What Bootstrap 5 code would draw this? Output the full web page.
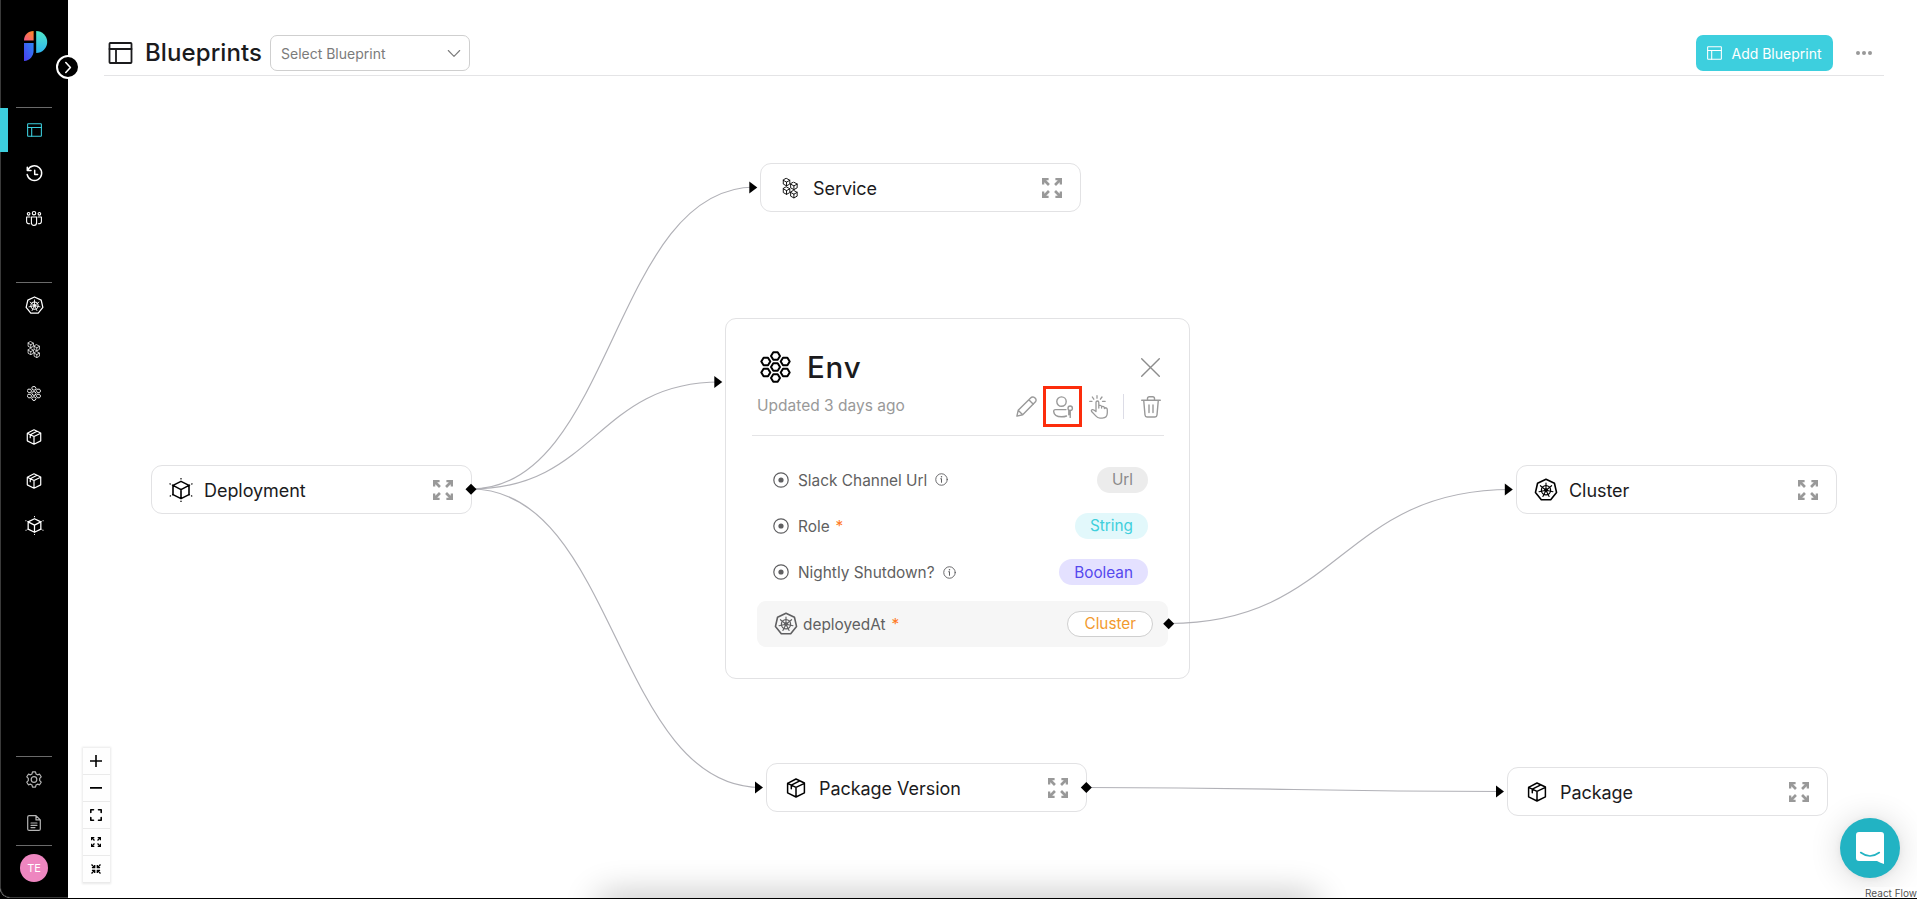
<!DOCTYPE html>
<html lang="en">
<head>
<meta charset="utf-8">
<meta name="viewport" content="width=device-width, initial-scale=1">
<title>Blueprints</title>
<link href="https://cdn.jsdelivr.net/npm/bootstrap@5.3.0/dist/css/bootstrap.min.css" rel="stylesheet">
<style>
  body { font-family: Inter, "Liberation Sans", sans-serif; color: #1b1b1d; background: #000; height: 100vh; overflow: hidden; }
  svg { display: block; overflow: visible; flex: none; }
  .ico { fill: none; stroke: currentColor; stroke-linecap: round; stroke-linejoin: round; }
  .app { height: 898px; background: #fff; border-bottom-left-radius: 10px; overflow: hidden; }

  .side { width: 68px; background: #000; color: #fff; border-left: 1px solid #3a3a3a; border-bottom: 1px solid #3a3a3a; border-bottom-left-radius: 10px; position: relative; z-index: 3; }
  .side-logo { height: 107px; padding: 31px 0 0 23px; }
  .side-rule { width: 36px; height: 1px; margin-left: 15px; background: #6a6a6a; flex: none; }
  .side-item { height: 44px; width: 67px; padding-right: 1px; color: #fff; }
  .side-item.current { color: #3dcfde; box-shadow: inset 7px 0 #3dcfde, -1px 0 #3dcfde; }
  .side-item.dim { color: #b5b5b5; }
  .side-gap { height: 42px; }
  .side-toggle { position: absolute; left: 55px; top: 55px; width: 24px; height: 24px; border: 2px solid #fff; background: #000; color: #fff; }
  .avatar { width: 28px; height: 28px; margin: 8px 0 15px 19px; background: #ee86c0; font-size: 11px; }

  .topbar { height: 76px; margin-left: 36px; margin-right: 33px; padding-top: 31px; border-bottom: 1px solid #e4e4e6; }
  .topbar h1 { font-size: 24px; font-weight: 500; width: 121px; white-space: nowrap; letter-spacing: .1px; padding-top: 1px; }
  .picker { width: 200px; height: 36px; border: 1px solid #cfcfcf; border-radius: 7px; color: #7b7b7b; font-size: 14px; padding: 0 9px 0 10px; }
  .btn-add { width: 137px; height: 36px; background: #3dcfde; color: #fff; border-radius: 7px; font-size: 14px; padding: 0; }
  .btn-add:hover { background: #33bfce; color: #fff; }
  .btn-add svg { margin-right: 9px; }
  .more { color: #999; margin-left: 23px; margin-right: 12px; }

  /* canvas nodes */
  .canvas { position: relative; overflow: hidden; }
  .edges { position: absolute; left: 0; top: 0; pointer-events: none; }
  .node { position: absolute; background: #fff; border: 1px solid #e2e2e4; border-radius: 11px; }
  .node-sm { width: 321px; height: 49px; padding: 0 18px 0 17px; font-size: 18px; }
  .node-sm .slot { width: 24px; margin-right: 11px; color: #000; }
  .node-sm .name { padding-top: 2px; letter-spacing: -.05px; }
  .node-sm .grow-ico { color: #999; }
  #n-service { left: 692px; top: 87px; }
  #n-deployment { left: 83px; top: 389px; }
  #n-version { left: 698px; top: 687px; }
  #n-cluster { left: 1448px; top: 389px; }
  #n-package { left: 1439px; top: 691px; }
  #n-env { left: 657px; top: 242px; width: 465px; height: 361px; padding: 30px 20px 0 26px; }
  .env-head { height: 36px; padding: 0 9px 0 7px; }
  .env-head h2 { font-size: 29.5px; font-weight: 500; margin-left: 15px; letter-spacing: .8px; padding-top: 1px; }
  .env-tools { height: 50px; padding: 0 8px 7px 5px; color: #999; }
  .env-tools small { font-size: 15.5px; padding-bottom: 2px; }
  .env-rule { height: 1px; width: 412px; background: #e4e4e6; }
  .hot { width: 39px; height: 41px; border: 3px solid #fc2d0c; margin: 0 7px 0 6px; }
  .tool-sep { width: 1px; height: 25px; background: #dcdce6; margin: 0 17px 0 15px; }
  .env-props { padding-top: 20.5px; }
  .prop { height: 46.4px; padding-left: 21px; padding-right: 21px; color: #5f5f61; font-size: 15.4px; }
  .prop .lead-ico { margin-right: 9px; }
  .prop span, .relation span { padding-top: 1px; }
  .star { color: #ff7a1f; margin-left: 6px; }
  .prop .pill, .relation .pill { height: 26px; border-radius: 13px; font-size: 15.3px; padding: 1px 15px 0; }
  .pill-url { background: #ececec; color: #8a8a8a; }
  .pill-string { background: #e2f8fb; color: #40cfdc; }
  .pill-bool { background: #e4e1ff; color: #5548ee; }
  .pill-rel { background: #fff; color: #f29a2e; border: 1px solid #cfcfcf; }
  .relation .pill-rel { padding: 1px 16px 0; }
  .relation { width: 411px; height: 46px; margin-left: 5px; margin-top: 5px; background: #f6f6f6; border-radius: 9px; padding: 0 15px 0 17px; color: #5f5f61; font-size: 15.4px; }
  .relation > svg { margin-right: 5px; }

  .zoomer { position: absolute; left: 14.5px; top: 672px; width: 27px; background: #fefefe; box-shadow: 0 0 2px 1px rgba(0,0,0,.09); }
  .zoomer button { height: 27px; width: 27px; border: 0; border-bottom: 1px solid #eaeaea; background: none; padding: 0; color: #000; }
  .chat { position: absolute; left: 1772px; top: 742px; width: 60px; height: 60px; background: #22b3c3; box-shadow: 0 1px 6px rgba(0,0,0,.06), 0 2px 32px rgba(0,0,0,.16); }
  .credit { position: absolute; right: 0; bottom: -1px; font-size: 10px; line-height: 12px; color: #555; background: rgba(255,255,255,.5); white-space: nowrap; }
  .dock-shade { position: absolute; left: 536px; right: 606px; bottom: -18px; height: 14px; border-radius: 10px; box-shadow: 0 0 34px 8px rgba(0,0,0,.24); }
</style>
</head>
<body>
<svg width="0" height="0" class="position-absolute">
  <symbol id="i-layout" viewBox="0 0 24 22"><g class="ico"><rect x="1" y="1" width="22" height="20" rx=".8"/><path d="M1 7h22M7.5 7v14"/></g></symbol>
  <symbol id="i-k8s" viewBox="0 0 24 24"><g class="ico"><path stroke-width="1.6" d="M12 1.2 20.44 5.27 22.53 14.4 16.69 21.73H7.31L1.47 14.4 3.56 5.27z"/><circle cx="12" cy="12.2" r="4.6" stroke-width="1.3"/><path stroke-width="1.1" d="M12 12.2V5M12 12.2l5.6-4.5M12 12.2l7 1.5M12 12.2l3.1 6.3M12 12.2l-3.1 6.3M12 12.2l-7 1.5M12 12.2 6.4 7.7"/><circle cx="12" cy="12.2" r="1.6"/></g></symbol>
  <symbol id="i-mini" viewBox="0 0 10 10"><path class="ico" d="M5 .9 8.6 2.9V7.1L5 9.1 1.4 7.1V2.9zM1.4 2.9 5 5l3.6-2.1M5 5v4"/></symbol>
  <symbol id="i-service" viewBox="0 0 18 22"><use href="#i-mini" x="0" y="0" width="9.6" height="9.6"/><use href="#i-mini" x="7.8" y="4" width="9.6" height="9.6"/><use href="#i-mini" x="0" y="9" width="9.6" height="9.6"/><use href="#i-mini" x="7.8" y="12.8" width="9.6" height="9.6"/></symbol>
  <symbol id="i-hexes" viewBox="0 0 30 32"><g class="ico" stroke-width="2"><path id="hx" d="M12.8 1.3h4.4L19.5 5 17.2 8.7h-4.4L10.5 5z"/><use href="#hx" y="11"/><use href="#hx" y="22"/><use href="#hx" x="-9.7" y="5.5"/><use href="#hx" x="9.7" y="5.5"/><use href="#hx" x="-9.7" y="16.5"/><use href="#hx" x="9.7" y="16.5"/></g></symbol>
  <symbol id="i-box" viewBox="0 0 20 20"><path class="ico" stroke-width="1.5" d="M10 1 18.4 5V14.8L10 19 1.6 14.8V5.4zM1.6 5.4 10 9.4l8.400-4M10 9.400v9.600M5.300 7.200 13.800 2.900M5.300 7.200v3.600"/></symbol>
  <symbol id="i-cube" viewBox="0 0 24 24"><g class="ico"><path stroke-width="1.6" d="M12 3.4 20 7.4V16.6L12 20.6 4 16.6V7.4zM4 7.4 12 11.6l8-4.2M12 11.6v9"/><path stroke-width="1.3" stroke-dasharray=".3 2.4" d="M12 .6V3M12 23.4V21M1 5.9 4 7.4M23 5.9 20 7.4M1.2 18 4 16.6M22.8 18 20 16.6"/></g></symbol>
  <symbol id="i-expand" viewBox="0 0 20 20"><g id="ar"><path d="M0 0h6.6v2.3H4.2L7.9 6 6 7.9 2.3 4.2v2.4H0z" fill="currentColor"/></g><use href="#ar" transform="matrix(-1 0 0 1 20 0)"/><use href="#ar" transform="matrix(1 0 0 -1 0 20)"/><use href="#ar" transform="matrix(-1 0 0 -1 20 20)"/></symbol>
  <symbol id="i-shrink" viewBox="0 0 20 20"><g id="as"><path d="M8.7 8.7H1.8V6.1H4.3L0 2 2 0l4.1 4.3V1.8h2.6z" fill="currentColor"/></g><use href="#as" transform="matrix(-1 0 0 1 20 0)"/><use href="#as" transform="matrix(1 0 0 -1 0 20)"/><use href="#as" transform="matrix(-1 0 0 -1 20 20)"/></symbol>
  <symbol id="i-radio" viewBox="0 0 16 16"><circle class="ico" cx="8" cy="8" r="7.2" stroke-width="1.2"/><circle cx="8" cy="8" r="2.6" fill="currentColor"/></symbol>
  <symbol id="i-info" viewBox="0 0 14 14"><circle class="ico" cx="7" cy="7" r="6.2"/><path class="ico" stroke-width="1.1" d="M7 6.3V10M6.1 6.3H7"/><circle cx="7" cy="4" r=".8" fill="currentColor"/></symbol>
</svg>

<div class="app d-flex">
  <nav class="side d-flex flex-column flex-shrink-0">
    <div class="side-logo">
      <svg width="23" height="30" viewBox="0 0 23 30">
        <defs>
          <linearGradient id="g1" x1="0" y1="1" x2="1" y2="0"><stop offset="0" stop-color="#f5588a"/><stop offset="1" stop-color="#ff8a1f"/></linearGradient>
          <linearGradient id="g2" x1="0" y1="0" x2="0" y2="1"><stop offset="0" stop-color="#4fe8c8"/><stop offset="1" stop-color="#2fb4f0"/></linearGradient>
          <linearGradient id="g3" x1="1" y1="0" x2="0" y2="1"><stop offset="0" stop-color="#2e86f5"/><stop offset="1" stop-color="#4a3cf0"/></linearGradient>
        </defs>
        <path d="M9.6 0V9.6H0C0 4 4 0 9.6 0z" fill="url(#g1)"/>
        <path d="M12.2 0A11 11 0 0 1 12.2 22z" fill="url(#g2)"/>
        <path d="M0 12H9.6V19.5C9.6 25 6 29.5 0 30z" fill="url(#g3)"/>
      </svg>
    </div>
    <button class="side-toggle rounded-circle p-0 d-flex align-items-center justify-content-center" aria-label="Expand"><svg class="ico" width="6" height="11" viewBox="0 0 6 11" stroke-width="1.6"><path d="M.8.5 5.4 5.5.8 10.5"/></svg></button>
    <div class="side-rule"></div>
    <a class="side-item current d-flex align-items-center justify-content-center"><svg width="15" height="14" stroke-width="1.7"><use href="#i-layout"/></svg></a>
    <a class="side-item d-flex align-items-center justify-content-center"><svg class="ico" width="17" height="16" viewBox="0 0 17 16" stroke-width="1.5"><path d="M1.7 4.2A7.3 7.3 0 1 1 1.2 8.6M1.3 1.2V4.6H5M8.7 4.2V8.6H11.6"/></svg></a>
    <a class="side-item d-flex align-items-center justify-content-center"><svg class="ico" width="16" height="15" viewBox="0 0 16 15" stroke-width="1.1"><circle cx="8" cy="2.2" r="1.7"/><circle cx="2.6" cy="2.8" r="1.3"/><circle cx="13.4" cy="2.8" r="1.3"/><path d="M5.4 6h5.2v5.4q0 3-2.6 3t-2.6-3zM3.9 6H.6v4.4q0 2.4 3.2 2.4M12.1 6h3.3v4.4q0 2.4-3.2 2.4"/></svg></a>
    <div class="side-gap"></div>
    <div class="side-rule"></div>
    <a class="side-item d-flex align-items-center justify-content-center"><svg width="19" height="19"><use href="#i-k8s"/></svg></a>
    <a class="side-item d-flex align-items-center justify-content-center"><svg width="14" height="17"><use href="#i-service"/></svg></a>
    <a class="side-item d-flex align-items-center justify-content-center"><svg width="14" height="15"><use href="#i-hexes"/></svg></a>
    <a class="side-item d-flex align-items-center justify-content-center"><svg width="16" height="16"><use href="#i-box"/></svg></a>
    <a class="side-item d-flex align-items-center justify-content-center"><svg width="16" height="16"><use href="#i-box"/></svg></a>
    <a class="side-item d-flex align-items-center justify-content-center"><svg width="19" height="19"><use href="#i-cube"/></svg></a>
    <div class="side-rule mt-auto"></div>
    <a class="side-item dim d-flex align-items-center justify-content-center"><svg class="ico" width="16" height="17" viewBox="0 0 16 17" stroke-width="1.2"><circle cx="8" cy="8.5" r="2.8"/><path d="M6.5.8h3l.5 2.1 1.5.9 2.1-.6 1.6 2.6L13.7 7.4V9.6l1.5 1.6-1.6 2.6-2.1-.6-1.5.9-.5 2.1h-3L6 14.1l-1.5-.9-2.1.6L.8 11.2l1.5-1.6V7.4L.8 5.8l1.6-2.6 2.1.6L6 2.9z"/></svg></a>
    <a class="side-item dim d-flex align-items-center justify-content-center"><svg class="ico" width="14" height="16" viewBox="0 0 14 16" stroke-width="1.2"><path d="M9 .6H2.2Q.7.6.7 2.1v11.8q0 1.5 1.5 1.5h9.6q1.5 0 1.5-1.5V4.9zM9 .6v4.3h4.3M4 8h6M4 10.3h6M4 12.6h4"/></svg></a>
    <div class="side-rule"></div>
    <div class="avatar rounded-circle d-flex align-items-center justify-content-center flex-shrink-0">TE</div>
  </nav>

  <main class="d-flex flex-column flex-grow-1">
    <header class="topbar d-flex align-items-center">
      <svg class="ms-1 me-1" width="25" height="22" stroke-width="1.8"><use href="#i-layout"/></svg>
      <h1 class="mb-0 ms-2">Blueprints</h1>
      <div class="picker ms-1 d-flex align-items-center justify-content-between"><span>Select Blueprint</span><svg class="ico" width="12" height="7" viewBox="0 0 12 7" stroke-width="1.1"><path d="M.3.5 6 6.3 11.7.5"/></svg></div>
      <button class="btn btn-add ms-auto d-flex align-items-center justify-content-center"><svg width="15" height="14" stroke-width="1.7"><use href="#i-layout"/></svg>Add Blueprint</button>
      <svg class="more" width="16" height="4" fill="currentColor"><circle cx="2" cy="2" r="2"/><circle cx="8" cy="2" r="2"/><circle cx="14" cy="2" r="2"/></svg>
    </header>

    <section class="canvas flex-grow-1">
      <div class="dock-shade"></div>

      <article class="node node-sm d-flex align-items-center" id="n-service"><span class="slot d-flex justify-content-center"><svg width="17" height="22"><use href="#i-service"/></svg></span><span class="name flex-grow-1">Service</span><svg class="grow-ico" width="20" height="20"><use href="#i-expand"/></svg></article>
      <article class="node node-sm d-flex align-items-center" id="n-deployment"><span class="slot d-flex justify-content-center"><svg width="24" height="24"><use href="#i-cube"/></svg></span><span class="name flex-grow-1">Deployment</span><svg class="grow-ico" width="20" height="20"><use href="#i-expand"/></svg></article>
      <article class="node node-sm d-flex align-items-center" id="n-version"><span class="slot d-flex justify-content-center"><svg width="20" height="20"><use href="#i-box"/></svg></span><span class="name flex-grow-1">Package Version</span><svg class="grow-ico" width="20" height="20"><use href="#i-expand"/></svg></article>
      <article class="node node-sm d-flex align-items-center" id="n-cluster"><span class="slot d-flex justify-content-center"><svg width="24" height="24"><use href="#i-k8s"/></svg></span><span class="name flex-grow-1">Cluster</span><svg class="grow-ico" width="20" height="20"><use href="#i-expand"/></svg></article>
      <article class="node node-sm d-flex align-items-center" id="n-package"><span class="slot d-flex justify-content-center"><svg width="20" height="20"><use href="#i-box"/></svg></span><span class="name flex-grow-1">Package</span><svg class="grow-ico" width="20" height="20"><use href="#i-expand"/></svg></article>

      <article class="node" id="n-env">
        <div class="env-head d-flex align-items-center">
          <svg class="text-black" width="33" height="32"><use href="#i-hexes"/></svg>
          <h2 class="mb-0">Env</h2>
          <svg class="ico ms-auto" width="19" height="19" viewBox="0 0 19 19" stroke-width="1.4" color="#8c8c8c"><path d="M.7.7l17.6 17.6M18.3.7.7 18.3"/></svg>
        </div>
        <div class="env-tools d-flex align-items-center">
          <small>Updated 3 days ago</small>
          <div class="d-flex align-items-center ms-auto">
            <svg class="ico" width="21" height="21" viewBox="0 0 21 21" stroke-width="1.4"><path d="M.9 20.1 2.2 14.3 14.6 1.9q1.5-1.5 3.1-.7 3.4 1.7 2 4.3L6.7 18.7zM12.8 3.7l4.5 4.5M2.2 14.3l4.5 4.4"/></svg>
            <span class="hot d-flex align-items-center justify-content-center"><svg class="ico" width="20" height="22" viewBox="0 0 20 22" stroke-width="1.4"><circle cx="8.5" cy="5.6" r="4.7"/><path d="M13 13.6H2.5Q.5 13.6.7 15.6q.5 5.2 7.8 5.2 3 0 5-.8"/><circle cx="17.2" cy="12.2" r="2.2"/><path d="M17.2 14.4v7M15.8 14.7v4"/></svg></span>
            <svg class="ico" width="19" height="24" viewBox="0 0 19 24" stroke-width="1.3"><path d="M7 16.5V7.5q0-1.5 1.4-1.5t1.4 1.5V13M9.8 10.6q2.6-.8 2.8 1.2V13M12.6 11.5q2.6-.5 2.8 1.3v.8M15.4 12.8q2.9-.3 2.9 2v3q0 5.3-5 5.3H11q-2.5 0-4.2-2.2L2.6 16.5q-.7-1.5.7-1.9 1.3-.3 3.7 2M8 .7v2.5M3.3 2l1.5 2.2M13 2l-1.6 2.2M.7 6.3H3M13.5 6.3h2.7"/></svg>
            <span class="tool-sep"></span>
            <svg class="ico" width="20" height="22" viewBox="0 0 20 22" stroke-width="1.4"><path d="M.7 4.2h18.6M2.7 4.2 4 19q.2 2 2 2h8q1.8 0 2-2L17.3 4.2M6.5 4V2.5Q6.5.7 8.3.7h3.4q1.8 0 1.8 1.8V4M8 9v7.5M12 9v7.5"/></svg>
          </div>
        </div>
        <div class="env-rule"></div>
        <div class="env-props">
          <div class="prop d-flex align-items-center"><svg width="16" height="16" class="lead-ico"><use href="#i-radio"/></svg><span>Slack Channel Url</span><svg class="ms-2" width="13" height="13"><use href="#i-info"/></svg><span class="pill pill-url ms-auto d-flex align-items-center">Url</span></div>
          <div class="prop d-flex align-items-center"><svg width="16" height="16" class="lead-ico"><use href="#i-radio"/></svg><span>Role</span><span class="star">*</span><span class="pill pill-string ms-auto d-flex align-items-center">String</span></div>
          <div class="prop d-flex align-items-center"><svg width="16" height="16" class="lead-ico"><use href="#i-radio"/></svg><span>Nightly Shutdown?</span><svg class="ms-2" width="13" height="13"><use href="#i-info"/></svg><span class="pill pill-bool ms-auto d-flex align-items-center">Boolean</span></div>
        </div>
        <div class="relation d-flex align-items-center"><svg width="24" height="24"><use href="#i-k8s"/></svg><span>deployedAt</span><span class="star">*</span><span class="pill pill-rel ms-auto d-flex align-items-center">Cluster</span></div>
      </article>

      <svg class="edges" width="1849" height="822" viewBox="68 76 1849 822">
        <g fill="none" stroke="#b1b1b7" stroke-width="1.2">
          <path d="M471 489C613 489 613 187 755 187"/>
          <path d="M471 489C596 489 596 382 720 382"/>
          <path d="M471 489C616 489 616 787.5 761 787.5"/>
          <path d="M1169 623.5C1340 623.5 1340 489.5 1511 489.5"/>
          <path d="M1086 787.5C1294 787.5 1294 791.5 1502 791.5"/>
        </g>
        <defs><path id="tri" d="M0 0-8-6V6z"/><path id="dia" d="M-5.5 0 0-5.5 5.5 0 0 5.5z"/></defs>
        <use href="#tri" x="757.3" y="187.5"/><use href="#tri" x="722.3" y="382"/><use href="#tri" x="763" y="787.5"/><use href="#tri" x="1512.8" y="489.5"/><use href="#tri" x="1504" y="791.5"/>
        <use href="#dia" x="471" y="489.3"/><use href="#dia" x="1168.7" y="623.7"/><use href="#dia" x="1086.3" y="787.5"/>
      </svg>

      <div class="zoomer d-flex flex-column">
        <button class="d-flex align-items-center justify-content-center" aria-label="Zoom in"><svg width="12" height="12"><path d="M5.2 0h1.6v12H5.2zM0 5.2h12v1.6H0z"/></svg></button>
        <button class="d-flex align-items-center justify-content-center" aria-label="Zoom out"><svg width="12" height="2"><path d="M0 0h12v1.7H0z"/></svg></button>
        <button class="d-flex align-items-center justify-content-center" aria-label="Fit view"><svg class="ico" width="12" height="12" viewBox="0 0 12 12" stroke-width="1.6"><path d="M.8 3.5V.8h2.7M8.5.8h2.7v2.7M11.2 8.5v2.7H8.5M3.5 11.2H.8V8.5"/></svg></button>
        <button class="d-flex align-items-center justify-content-center" aria-label="Expand all"><svg width="10" height="10"><use href="#i-expand"/></svg></button>
        <button class="d-flex align-items-center justify-content-center" aria-label="Collapse all"><svg width="10" height="10"><use href="#i-shrink"/></svg></button>
      </div>

      <button class="chat rounded-circle border-0 p-0 d-flex align-items-center justify-content-center" aria-label="Chat"><svg width="28" height="32" viewBox="0 0 28 32"><path d="M3 0h22q3 0 3 3v29q-3.5-1.2-7-3H3q-3 0-3-3V3q0-3 3-3z" fill="#fff"/><path class="ico" d="M4.7 20.5q9.3 7 18.6 0" style="stroke:#22b3c3" stroke-width="1.6"/></svg></button>
      <div class="credit">React Flow</div>
    </section>
  </main>
</div>
<script src="https://cdn.jsdelivr.net/npm/bootstrap@5.3.0/dist/js/bootstrap.bundle.min.js"></script>
</body>
</html>
